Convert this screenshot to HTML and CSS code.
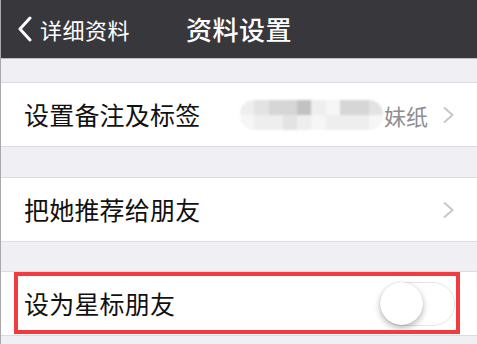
FILE: index.html
```html
<!DOCTYPE html>
<html lang="zh-CN">
<head>
<meta charset="utf-8">
<link rel="stylesheet" href="styles.css">
</head>
<body>
<div class="page">
  <header class="nav">
    <div class="nav-left">
      <svg class="back" width="16" height="26" viewBox="0 0 16 26"><path d="M13 2 L3 13 L13 24" fill="none" stroke="#fff" stroke-width="3" stroke-linecap="round" stroke-linejoin="round"/></svg>
      <span class="back-text">详细资料</span>
    </div>
    <div class="nav-title">资料设置</div>
    <div></div>
  </header>

  <div class="gap gap-first"></div>
  <div class="row">
    <span class="label">设置备注及标签</span>
    <div class="right">
      <div class="mosaic">
        <div class="mrow">
          <i class="c1"></i><i class="c2"></i><i class="c3"></i><i class="c3"></i><i class="c4"></i><i class="c1"></i><i class="c0"></i><i class="c3"></i><i class="c3"></i><i class="c2"></i>
        </div>
        <div class="mrow">
          <i class="c0"></i><i class="c1"></i><i class="c1"></i><i class="c2"></i><i class="c1"></i><i class="c0"></i><i class="c1"></i><i class="c1"></i><i class="c1"></i><i class="c0"></i>
        </div>
      </div>
      <span class="value">妹纸</span>
      <svg class="chev" width="13" height="18" viewBox="0 0 13 18"><path d="M2 1.5 L10.5 9 L2 16.5" fill="none" stroke="#c7c7cc" stroke-width="2"/></svg>
    </div>
  </div>
  <div class="gap gap-mid"></div>
  <div class="row">
    <span class="label">把她推荐给朋友</span>
    <div class="right">
      <svg class="chev" width="13" height="18" viewBox="0 0 13 18"><path d="M2 1.5 L10.5 9 L2 16.5" fill="none" stroke="#c7c7cc" stroke-width="2"/></svg>
    </div>
  </div>
  <div class="gap gap-last"></div>
  <div class="row row-star">
    <span class="label">设为星标朋友</span>
    <div class="switch"><div class="knob"></div></div>
    <div class="highlight"></div>
  </div>
</div>
</body>
</html>
```

FILE: styles.css
```css
html, body {
  margin: 0;
  padding: 0;
}
body {
  background: #efeff4;
  font-family: "Noto Sans CJK SC", "Noto Sans", sans-serif;
}
.page {
  width: 477px;
  height: 344px;
  overflow: hidden;
  background: #efeff4;
  border-left: 1px solid #a9a9ad;
  box-sizing: border-box;
}
.nav {
  height: 59px;
  background: #38373c;
  border-bottom: 1px solid #bdbdc2;
  box-sizing: border-box;
  display: grid;
  grid-template-columns: 1fr auto 1fr;
  align-items: center;
  color: #fff;
}
.nav-left {
  display: flex;
  align-items: center;
  padding-left: 16px;
  gap: 7px;
}
.back {
  display: block;
}
.back-text {
  font-size: 22px;
  line-height: 1;
  color: #fff;
  letter-spacing: 0.5px;
}
.nav-title {
  font-size: 26px;
  line-height: 1;
  font-weight: 500;
  letter-spacing: 0.5px;
}
.gap-first { height: 23px; }
.gap-mid { height: 30px; }
.gap-last { height: 29px; }
.row {
  position: relative;
  height: 65px;
  box-sizing: border-box;
  background: #fff;
  border-top: 1px solid #dcdce0;
  border-bottom: 1px solid #dcdce0;
  display: flex;
  align-items: center;
  justify-content: space-between;
  padding: 0 22px 0 23px;
}
.label {
  font-size: 25px;
  line-height: 1;
  color: #111;
  letter-spacing: 0.2px;
}
.right {
  display: flex;
  align-items: center;
}
.mosaic {
  width: 143px;
  height: 30px;
  border-radius: 14px;
  overflow: hidden;
  display: flex;
  flex-direction: column;
  margin-right: 1px;
  filter: blur(1px);
}
.mrow {
  display: flex;
  flex: 1;
}
.mrow i {
  flex: 1;
  display: block;
}
.c0 { background: #f6f6f6; }
.c1 { background: #eeeeee; }
.c2 { background: #e3e3e3; }
.c3 { background: #d6d6d6; }
.c4 { background: #c2c2c2; }
.value {
  font-size: 22px;
  line-height: 1;
  color: #8e8e93;
  margin-right: 14px;
}
.chev {
  display: block;
}
.row-star {
  padding-right: 22px;
}
.switch {
  width: 75px;
  height: 44px;
  box-sizing: border-box;
  border: 1.5px solid #e4e4e6;
  border-radius: 22px;
  background: #fff;
  position: relative;
}
.knob {
  position: absolute;
  left: -1px;
  top: -1px;
  width: 43px;
  height: 43px;
  border-radius: 50%;
  background: #fff;
  box-shadow: 0 3px 6px rgba(0, 0, 0, 0.28), 0 0 1px rgba(0, 0, 0, 0.2);
}
.highlight {
  position: absolute;
  left: 13px;
  top: 0;
  width: 446px;
  height: 62px;
  box-sizing: border-box;
  border: 4px solid #f23b3f;
  pointer-events: none;
}
```
